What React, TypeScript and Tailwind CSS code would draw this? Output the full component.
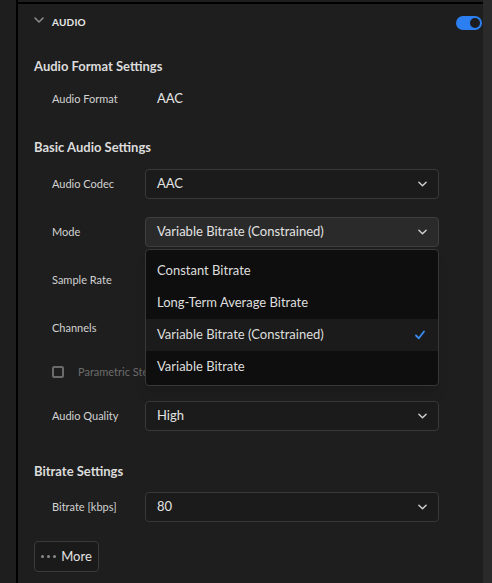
import React from 'react';

const font = { fontFamily: 'Lato, "Liberation Sans", sans-serif' };

const Chevron: React.FC<{ className?: string }> = ({ className }) => (
  <svg viewBox="0 0 10 6" className={className} fill="none" stroke="currentColor" strokeWidth={1.6} strokeLinecap="round" strokeLinejoin="round">
    <path d="M1 1l4 4 4-4" />
  </svg>
);

const Select: React.FC<{ value: string; active?: boolean; children?: React.ReactNode }> = ({ value, active, children }) => (
  <div className="relative w-[294px]">
    <div
      className={`h-[30px] rounded-[4px] border flex items-center justify-between pl-[11px] pr-[11px] ${
        active ? 'bg-[#2a2a2a] border-[#3e3e3e]' : 'bg-[#1b1b1b] border-[#383838]'
      }`}
    >
      <span className="text-[13px] text-[#e3e3e3]">{value}</span>
      <Chevron className="w-[9px] h-[6px] text-[#cfcfcf]" />
    </div>
    {children}
  </div>
);

const Row: React.FC<{ label: string; className?: string; children?: React.ReactNode }> = ({ label, className, children }) => (
  <div className={`flex items-center pl-[18px] ${className ?? ''}`}>
    <span className="w-[93px] text-[11px] text-[#d2d2d2]">{label}</span>
    {children}
  </div>
);

const options = ['Constant Bitrate', 'Long-Term Average Bitrate', 'Variable Bitrate (Constrained)', 'Variable Bitrate'];

export default function App() {
  return (
    <div className="w-[492px] h-[583px] flex bg-[#1e1e1e] overflow-hidden select-none" style={font}>
      <div className="w-4 bg-[#1e1e1e]" />
      <div className="w-[467px] border-l-2 border-black flex flex-col">
        <div className="mt-[2px] border-t-2 border-black" />
        {/* Header */}
        <div className="h-[37px] flex items-center justify-between pl-4 pr-[1px]">
          <div className="flex items-center">
            <Chevron className="w-[10px] h-[6px] text-[#8a8a8a] mr-[8px] -mt-[5px]" />
            <span className="text-[10px] font-bold tracking-[0.2px] text-[#e8e8e8]">AUDIO</span>
          </div>
          <div className="w-[26px] h-[14px] rounded-full bg-[#2b7ff0] flex items-center justify-end pr-[2px]">
            <div className="w-[10px] h-[10px] rounded-full bg-[#1c1c1c]" />
          </div>
        </div>

        <div className="pl-4 flex flex-col">
          <div className="mt-4 h-5 flex items-center text-[13px] font-bold text-[#dcdcdc]">Audio Format Settings</div>
          <Row label="Audio Format" className="mt-[7px] h-[30px]">
            <span className="pl-3 text-[13px] text-[#e6e6e6]">AAC</span>
          </Row>

          <div className="mt-6 h-5 flex items-center text-[13px] font-bold text-[#dcdcdc]">Basic Audio Settings</div>
          <Row label="Audio Codec" className="mt-[11px]">
            <Select value="AAC" />
          </Row>
          <Row label="Mode" className="mt-[18px] relative z-10">
            <Select value="Variable Bitrate (Constrained)" active>
              <div className="absolute left-0 top-[32px] w-[294px] h-[137px] rounded-[4px] border border-[#383838] bg-[#0e0e0e] pt-[5px] shadow-lg">
                {options.map((o, i) => (
                  <div
                    key={o}
                    className={`h-[32px] flex items-center justify-between pl-[11px] pr-[13px] text-[13px] text-[#dedede] ${
                      i === 2 ? 'bg-[#1b1b1b]' : ''
                    }`}
                  >
                    <span>{o}</span>
                    {i === 2 && (
                      <svg viewBox="0 0 10 10" className="w-[10px] h-[10px]" fill="none" stroke="#3b8cf0" strokeWidth={1.8} strokeLinecap="round" strokeLinejoin="round">
                        <path d="M1 5.5l2.8 2.8L9 1.5" />
                      </svg>
                    )}
                  </div>
                ))}
              </div>
            </Select>
          </Row>
          <Row label="Sample Rate" className="mt-[18px] h-[30px]" />
          <Row label="Channels" className="mt-[18px] h-[30px]" />
          <div className="mt-4 h-[26px] flex items-center pl-[18px]">
            <div className="w-[12px] h-[12px] border-2 border-[#6a6a6a] rounded-[2px]" />
            <span className="ml-[14px] text-[11px] text-[#6c6c6c]">Parametric Stereo</span>
          </div>
          <Row label="Audio Quality" className="mt-4">
            <Select value="High" />
          </Row>

          <div className="mt-[31px] h-5 flex items-center text-[13px] font-bold text-[#dcdcdc]">Bitrate Settings</div>
          <Row label="Bitrate [kbps]" className="mt-[10px]">
            <Select value="80" />
          </Row>

          <div className="mt-[19px] w-[65px] h-[31px] rounded-[4px] border border-[#3a3a3a] bg-[#1a1a1a] flex items-center justify-center gap-[5px]">
            <span className="flex gap-[3px]">
              <span className="w-[3px] h-[3px] rounded-full bg-[#8a8a8a]" />
              <span className="w-[3px] h-[3px] rounded-full bg-[#8a8a8a]" />
              <span className="w-[3px] h-[3px] rounded-full bg-[#8a8a8a]" />
            </span>
            <span className="text-[13px] text-[#e3e3e3]">More</span>
          </div>
        </div>
      </div>
      <div className="flex-1 bg-[#2a2a2a]" />
    </div>
  );
}
